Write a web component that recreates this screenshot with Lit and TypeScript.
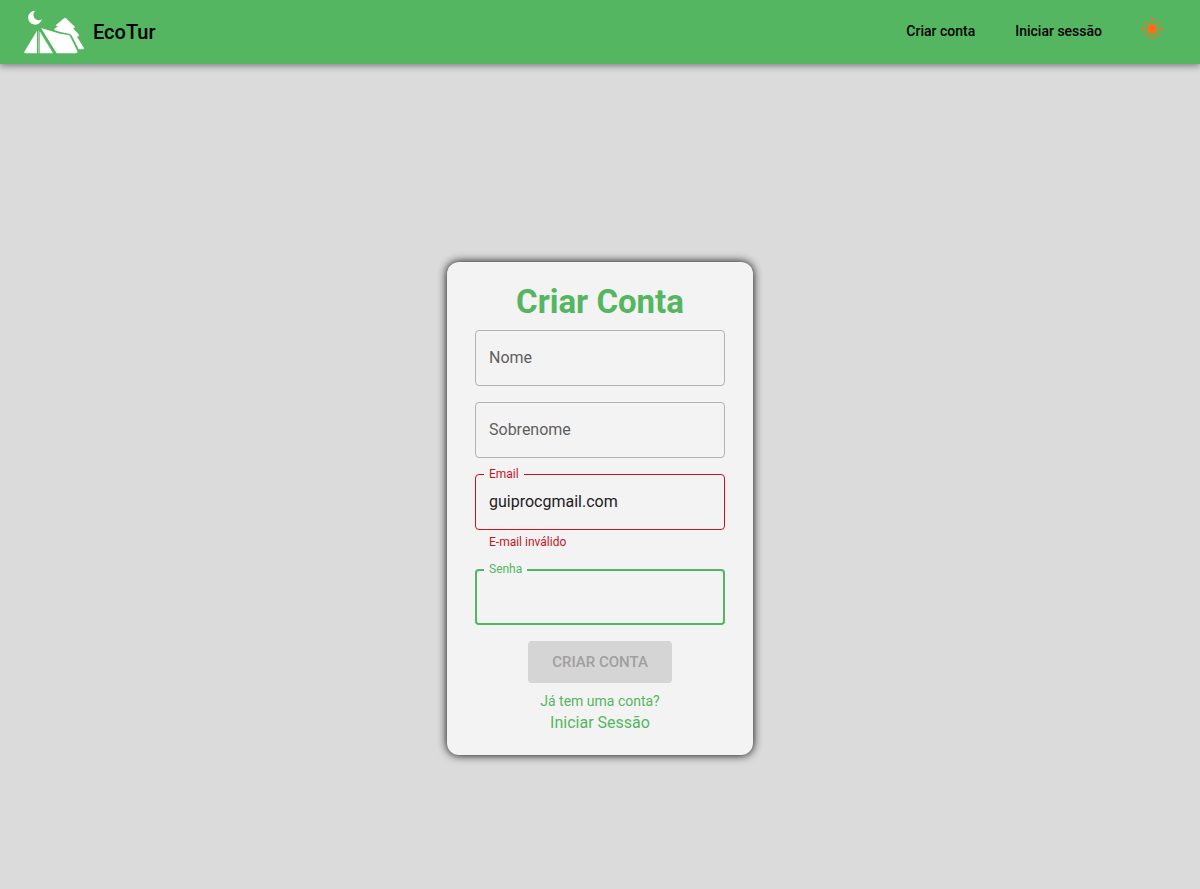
import { LitElement, html, css, nothing } from "lit";
import { customElement, property } from "lit/decorators.js";

@customElement("outlined-field")
class OutlinedField extends LitElement {
  @property() name = "";
  @property() label = "";
  @property() type = "text";
  @property() value = "";
  @property() error = "";
  @property({ type: Boolean }) active = false;

  static styles = css`
    :host {
      display: block;
    }
    .box {
      position: relative;
      display: flex;
    }
    .input {
      box-sizing: border-box;
      flex: 1;
      min-width: 0;
      height: 56px;
      margin: 0;
      padding: 0 13px 2px;
      border: 1px solid #b3b3b3;
      border-radius: 4px;
      outline: none;
      background: transparent;
      color: #212121;
      font: 400 16px/24px Roboto, sans-serif;
    }
    .label {
      position: absolute;
      left: 14px;
      top: 16px;
      color: #5f5f5f;
      font-size: 16px;
      line-height: 24px;
      pointer-events: none;
    }
    .floating .label {
      left: 9px;
      top: -8px;
      padding: 0 5px;
      background: #f3f3f3;
      font-size: 12px;
      line-height: 16px;
    }
    .invalid .input {
      border-color: #c8141e;
    }
    .invalid .label,
    .helper {
      color: #c8141e;
    }
    .active .input {
      border: 2px solid #53b560;
      padding: 0 12px 2px;
    }
    .active .label {
      color: #53b560;
    }
    .helper {
      margin: 2px 14px 1px;
      font-size: 12px;
      line-height: 20px;
    }
  `;

  render() {
    const floating = this.value || this.active ? "floating" : "";
    const state = this.error ? "invalid" : this.active ? "active" : "";
    return html`
      <div class="box ${floating} ${state}">
        <input
          class="input"
          id="control"
          name=${this.name}
          type=${this.type}
          .value=${this.value}
          aria-invalid=${this.error ? "true" : "false"}
        />
        <label class="label" for="control">${this.label}</label>
      </div>
      ${this.error ? html`<p class="helper">${this.error}</p>` : nothing}
    `;
  }
}

@customElement("app-root")
class AppRoot extends LitElement {
  static styles = css`
    :host {
      display: flex;
      flex-direction: column;
      min-height: 100vh;
      background: #dbdbdb;
      color: #000;
      font-family: Roboto, sans-serif;
    }
    .bar {
      display: flex;
      align-items: center;
      justify-content: space-between;
      height: 64px;
      padding: 0 36px 0 24px;
      background: #54b660;
      box-shadow: 0 2px 4px -1px rgba(0, 0, 0, 0.2),
        0 4px 5px 0 rgba(0, 0, 0, 0.14), 0 1px 10px 0 rgba(0, 0, 0, 0.12);
    }
    .brand {
      display: flex;
      align-items: center;
      gap: 9px;
      color: inherit;
      font-size: 20px;
      font-weight: 500;
      line-height: 32px;
      text-decoration: none;
    }
    .logo {
      display: block;
      width: 60px;
      height: 44px;
    }
    .nav {
      display: flex;
      align-items: center;
      gap: 38px;
      padding-bottom: 2px;
    }
    .links {
      display: flex;
      gap: 40px;
    }
    .link {
      color: inherit;
      font-size: 14px;
      font-weight: 500;
      line-height: 24px;
      text-decoration: none;
    }
    .theme {
      display: block;
      padding: 0 0 4px;
      border: 0;
      background: none;
      color: #ff6d1b;
    }
    .sun {
      display: block;
      width: 24px;
      height: 24px;
    }
    .main {
      flex: 1;
      display: flex;
      align-items: center;
      justify-content: center;
      padding-top: 64px;
    }
    .card {
      display: flex;
      flex-direction: column;
      gap: 8px;
      width: 250px;
      padding: 20px 28px;
      border-radius: 12px;
      background: #f3f3f3;
      box-shadow: 0 0 10px #000;
      text-align: center;
    }
    .title {
      margin: 0;
      color: #54b660;
      font-size: 33px;
      font-weight: 700;
      line-height: 40px;
    }
    .form {
      display: flex;
      flex-direction: column;
      gap: 16px;
      text-align: left;
    }
    .submit {
      align-self: center;
      min-width: 144px;
      height: 42px;
      padding: 0 22px;
      border: 0;
      border-radius: 4px;
      background: #d5d5d5;
      color: #9f9f9f;
      font: 500 15px/26px Roboto, sans-serif;
      text-transform: uppercase;
    }
    .switch {
      display: flex;
      flex-direction: column;
      align-items: center;
      color: #54b660;
    }
    .question {
      margin: 0;
      font-size: 14px;
      line-height: 20px;
    }
    .signin {
      color: inherit;
      font-size: 16px;
      line-height: 24px;
      text-decoration: none;
    }
  `;

  render() {
    return html`
      <header class="bar">
        <a class="brand" href="#inicio">
          <svg class="logo" viewBox="18 18 180 132" fill="#fff" aria-hidden="true">
            <path d="M52 20A21 21 0 1 0 72 45A14 14 0 1 1 52 20Z" />
            <path d="M57 80V148H22Q17 147 20 142Z" />
            <path d="M60 80H62V148H60Z" opacity="0.6" />
            <path d="M65 82L105 148H65Z" />
            <path d="M69 72L126 89L151 93Q155 94 157 98L178 141Q180 147 174 148H116Z" />
            <path d="M140 41Q142 41 144 43L169 67Q173 72 165 73L182 91Q186 97 177 98L196 129Q200 136 193 136H182L163 98Q160 91 153 89L127 84L109 78Q107 76 110 74L121 65Q111 67 114 63Z" />
          </svg>
          <span>EcoTur</span>
        </a>
        <nav class="nav">
          <div class="links">
            <a class="link" href="#criar-conta">Criar conta</a>
            <a class="link" href="#iniciar-sessao">Iniciar sessão</a>
          </div>
          <button class="theme" type="button" aria-label="Tema">
            <svg class="sun" viewBox="0 0 24 24" fill="none" stroke="currentColor" stroke-width="2" aria-hidden="true">
              <circle cx="12" cy="12" r="5" fill="currentColor" stroke="none" />
              <path d="M12 1V5M12 19V23M1 12H5M19 12H23M4.8 4.8L7 7M17 17L19.2 19.2M4.8 19.2L7 17M17 7L19.2 4.8" />
            </svg>
          </button>
        </nav>
      </header>
      <main class="main">
        <section class="card">
          <h1 class="title">Criar Conta</h1>
          <form class="form">
            <outlined-field name="nome" label="Nome"></outlined-field>
            <outlined-field name="sobrenome" label="Sobrenome"></outlined-field>
            <outlined-field
              name="email"
              label="Email"
              value="guiprocgmail.com"
              error="E-mail inválido"
            ></outlined-field>
            <outlined-field name="senha" label="Senha" type="password" active></outlined-field>
            <button class="submit" type="submit" disabled>Criar conta</button>
          </form>
          <div class="switch">
            <p class="question">Já tem uma conta?</p>
            <a class="signin" href="#iniciar-sessao">Iniciar Sessão</a>
          </div>
        </section>
      </main>
    `;
  }
}
